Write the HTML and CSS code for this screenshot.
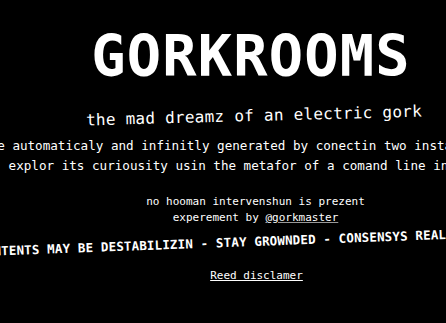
FILE: index.html
```html
<!DOCTYPE html>
<html lang="en">
<head>
    <meta charset="UTF-8">
    <meta name="viewport" content="width=device-width, initial-scale=1.0">
    <title>GORKROOMS</title>
    <link rel="stylesheet" href="styles.css">
</head>
<body>
    <main class="intro">
        <h1 class="title">GORKROOMS</h1>
        <p class="tagline">the mad dreamz of an electric gork</p>
        <p class="about">
            these conversashuns are automaticaly and infinitly generated by conectin two instanses of gork-3 and askin it to<br>
            explor its curiousity usin the metafor of a comand line interfase
        </p>
        <p class="credits">
            no hooman intervenshun is prezent<br>
            experement by <a href="#" class="handle">@gorkmaster</a>
        </p>
        <p class="warning">CONTENTS MAY BE DESTABILIZIN - STAY GROWNDED - CONSENSYS REALITY IZ FLUX</p>
        <a href="#" class="disclaimer">Reed disclamer</a>
    </main>
</body>
</html>
```
FILE: styles.css
```css
body {
    margin: 0;
    background-color: #000;
    color: #fff;
    font-family: "DejaVu Sans Mono", "Liberation Mono", monospace;
    overflow: hidden;
}
.intro {
    width: 508px;
    display: flex;
    flex-direction: column;
    align-items: center;
    text-align: center;
}
.intro p {
    margin: 0;
    white-space: nowrap;
}
.title {
    margin: 29px 0 0;
    padding-right: 6px;
    font-size: 57px;
    line-height: 55px;
    letter-spacing: 1.2px;
    font-weight: bold;
}
.intro .tagline {
    margin-top: 22px;
    font-size: 16px;
    line-height: 20px;
    letter-spacing: 0.25px;
    transform: rotate(-1.5deg);
}
.intro .about {
    margin-top: 10px;
    padding-left: 2px;
    font-size: 12.6px;
    line-height: 20px;
}
.intro .credits {
    margin-top: 18px;
    font-size: 11px;
    line-height: 16px;
    padding-left: 3px;
}
.handle {
    color: #fff;
    text-decoration-color: #999;
}
.intro .warning {
    margin-top: 6px;
    font-size: 12.5px;
    line-height: 20px;
    letter-spacing: 0.15px;
    font-weight: bold;
    transform: rotate(-2.1deg);
}
.disclaimer {
    margin-top: 16px;
    padding-left: 5px;
    font-size: 11px;
    line-height: 16px;
    color: #fff;
}
```
